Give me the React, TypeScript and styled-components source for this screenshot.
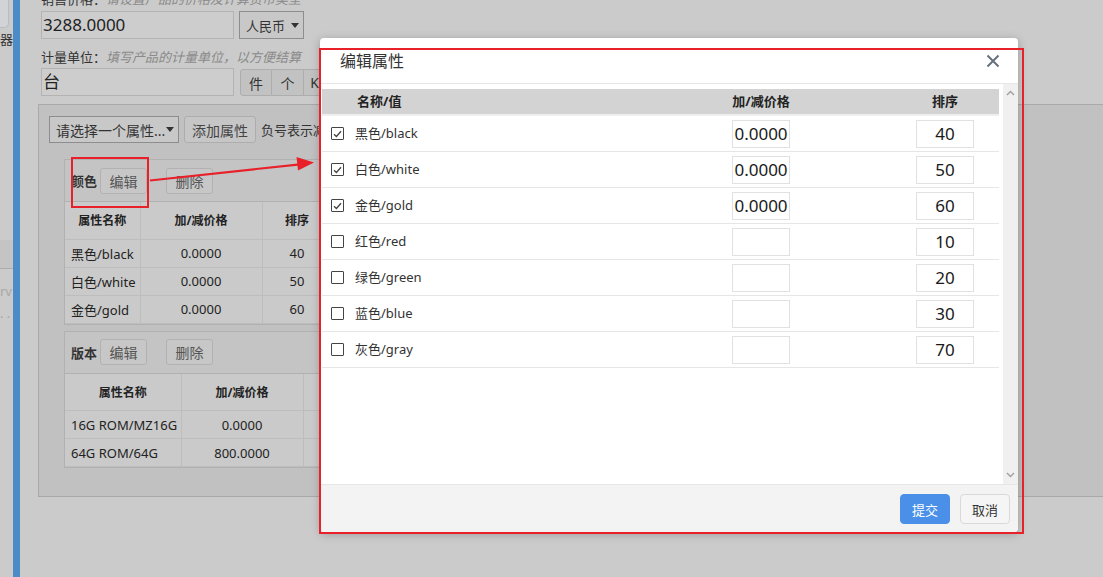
import React from 'react';
import styled, { createGlobalStyle } from 'styled-components';

const FONT = `"Noto Sans", "Noto Sans CJK SC", sans-serif`;
const RED = '#e8202a';

const GlobalStyle = createGlobalStyle`
  html, body {
    margin: 0;
    padding: 0;
  }
  body {
    font-family: ${FONT};
    color: #333;
    background: #cbcbcb;
  }
  * {
    box-sizing: border-box;
  }
`;

const Page = styled.div`
  position: relative;
  display: flex;
  width: 1103px;
  height: 577px;
  overflow: hidden;
  background: #cbcbcb;
`;

/* left navigation, mostly cut off */
const Sidebar = styled.aside`
  flex: none;
  width: 13px;
  display: flex;
  flex-direction: column;
  overflow: hidden;
`;

const SideTab = styled.div`
  width: 9px;
  height: 28px;
  background: #d1d3d6;
  border-right: 1px solid #b9bbbe;
  border-bottom: 1px solid #b9bbbe;
  border-radius: 0 0 5px 0;
`;

const SideLabel = styled.div<{ $muted?: boolean; $top: number }>`
  margin-top: ${(p) => p.$top}px;
  font-size: 13px;
  line-height: 16px;
  white-space: nowrap;
  color: ${(p) => (p.$muted ? '#a8a8a8' : '#333')};
`;

const SideBlock = styled.div`
  margin-top: 193px;
  height: 29px;
  background: #c4c4c4;
  border-bottom: 1px solid #adadad;
`;

const AccentBar = styled.div`
  flex: none;
  width: 7px;
  background: #4b8bc7;
`;

const Main = styled.main`
  flex: 1;
  min-width: 0;
  padding-left: 18px;
  display: flex;
  flex-direction: column;
`;

const FieldLabel = styled.div<{ $first?: boolean }>`
  margin: ${(p) => (p.$first ? '-10px 0 3px 3px' : '9px 0 2px 3px')};
  height: 18px;
  font-size: 13px;
  line-height: 18px;
  white-space: nowrap;
  color: #333;
`;

const Hint = styled.span`
  font-style: italic;
  color: #8a8a8a;
`;

const FieldRow = styled.div`
  display: flex;
  align-items: flex-start;
  gap: 5px;
  margin-left: 3px;
  height: 28px;
`;

const TextBox = styled.div`
  width: 193px;
  height: 28px;
  border: 1px solid #b3b3b3;
  background: #cdcdcd;
  font-size: 17px;
  line-height: 26px;
  padding-left: 1px;
  color: #222;
`;

const Caret = styled.span`
  flex: none;
  width: 0;
  height: 0;
  border-left: 4px solid transparent;
  border-right: 4px solid transparent;
  border-top: 5px solid #333;
`;

const SelectBox = styled.div<{ $w: number; $h: number; $size: number }>`
  width: ${(p) => p.$w}px;
  height: ${(p) => p.$h}px;
  display: flex;
  align-items: center;
  justify-content: space-between;
  padding: 0 4px 0 6px;
  border: 1px solid #8d8d8d;
  background: #c8c8c8;
  font-size: ${(p) => p.$size}px;
  color: #333;
  white-space: nowrap;
`;

const UnitGroup = styled.div`
  display: flex;
  margin-left: 1px;
  margin-top: 1px;
`;

const UnitButton = styled.div`
  width: 32px;
  height: 27px;
  display: flex;
  align-items: center;
  justify-content: center;
  background: #c2c2c2;
  border: 1px solid #adadad;
  border-left-width: 0;
  font-size: 14px;
  color: #333;

  &:first-child {
    border-left-width: 1px;
    border-radius: 3px 0 0 3px;
  }
`;

const AttrPanel = styled.section`
  margin-top: 8px;
  margin-right: -4px;
  height: 393px;
  border: 1px solid #a9a9a9;
  background: #c1c1c1;
  padding: 11px 0 0 10px;
`;

const Toolbar = styled.div`
  display: flex;
  align-items: center;
  gap: 5px;
  height: 27px;
`;

const ToolButton = styled.div`
  height: 27px;
  padding: 0 7px;
  display: flex;
  align-items: center;
  background: #c6c6c6;
  border: 1px solid #adadad;
  border-radius: 3px;
  font-size: 14px;
  color: #444;
`;

const ToolNote = styled.span`
  font-size: 13px;
  color: #333;
  white-space: nowrap;
`;

const GroupStack = styled.div`
  display: flex;
  flex-direction: column;
  gap: 6px;
  padding: 16px 0 0 15px;
`;

const AttrGroup = styled.div`
  width: 600px;
  border: 1px solid #b1b1b1;
  background: #c4c4c4;
`;

const GroupHead = styled.div`
  height: 42px;
  display: flex;
  align-items: center;
  padding-left: 6px;
  border-bottom: 1px solid #b1b1b1;
`;

const GroupName = styled.span`
  font-size: 13px;
  font-weight: bold;
  color: #333;
`;

const GroupButton = styled.div<{ $gap: number }>`
  margin-left: ${(p) => p.$gap}px;
  height: 26px;
  width: 47px;
  display: flex;
  align-items: center;
  justify-content: center;
  background: #c7c7c7;
  border: 1px solid #b2b2b2;
  border-radius: 3px;
  font-size: 14px;
  color: #555;
`;

const AttrTable = styled.table`
  border-collapse: collapse;
  background: #cacaca;
  font-size: 13px;
  color: #222;
`;

const HeadCell = styled.th<{ $w: number }>`
  width: ${(p) => p.$w}px;
  height: 37px;
  padding: 0;
  font-size: 12px;
  font-weight: bold;
  text-align: center;
  border-right: 1px solid #bdbdbd;
  border-bottom: 1px solid #bdbdbd;
`;

const BodyCell = styled.td<{ $left?: boolean }>`
  height: 28px;
  padding: ${(p) => (p.$left ? '0 0 0 6px' : '0')};
  text-align: ${(p) => (p.$left ? 'left' : 'center')};
  white-space: nowrap;
  border-right: 1px solid #bdbdbd;
  border-bottom: 1px solid #bdbdbd;
`;

/* modal */
const Dialog = styled.div`
  position: absolute;
  left: 320px;
  top: 38px;
  width: 698px;
  height: 494px;
  display: flex;
  flex-direction: column;
  background: #fff;
  border-radius: 4px;
  box-shadow: 0 2px 10px rgba(0, 0, 0, 0.25);
  overflow: hidden;
`;

const DialogHead = styled.div`
  height: 46px;
  flex: none;
  display: flex;
  align-items: center;
  justify-content: space-between;
  padding: 0 18px 0 20px;
  border-bottom: 1px solid #e6e6e6;
`;

const DialogTitle = styled.h3`
  margin: 0 0 1px;
  font-size: 16px;
  font-weight: normal;
  color: #333;
`;

const CloseButton = styled.span`
  display: flex;
  width: 14px;
  height: 14px;
`;

const DialogBody = styled.div`
  flex: 1;
  display: flex;
  min-height: 0;
`;

const BodyContent = styled.div`
  flex: 1;
  padding: 5px 4px 0 2px;
`;

const FakeScroll = styled.div`
  flex: none;
  width: 15px;
  background: #f0f0f0;
  display: flex;
  flex-direction: column;
  justify-content: space-between;
  align-items: center;
  padding: 6px 0 6px;
`;

const GRID = '33px 335px 142px 1fr';

const EditHead = styled.div`
  display: grid;
  grid-template-columns: ${GRID};
  height: 27px;
  background: #d3d3d3;
  border-bottom: 2px solid #efefef;
  font-size: 13px;
  font-weight: bold;
  line-height: 25px;
  color: #222;
`;

const HeadName = styled.div`
  grid-column: span 2;
  padding-left: 35px;
`;

const HeadCenter = styled.div`
  text-align: center;
`;

const HeadSort = styled.div`
  display: flex;
  justify-content: flex-end;
  padding-right: 25px;

  & > span {
    width: 58px;
    text-align: center;
  }
`;

const EditRow = styled.div`
  display: grid;
  grid-template-columns: ${GRID};
  align-items: center;
  height: 36px;
  border-bottom: 1px solid #e6e6e6;
`;

const CheckCell = styled.div`
  padding-left: 9px;
  display: flex;
`;

const CheckBox = styled.span`
  width: 13px;
  height: 13px;
  border: 1px solid #444;
  border-radius: 1px;
  background: #fff;
  display: flex;
  align-items: center;
  justify-content: center;
`;

const NameCell = styled.div`
  font-size: 13px;
  line-height: 16px;
  margin-top: -2px;
  color: #333;
`;

const PriceCell = styled.div`
  display: flex;
  justify-content: center;
`;

const SortCell = styled.div`
  display: flex;
  justify-content: flex-end;
  padding-right: 25px;
`;

const ValueInput = styled.input`
  width: 58px;
  height: 28px;
  padding: 0;
  border: 1px solid #e1e1e1;
  border-radius: 0;
  outline: none;
  background: #fff;
  font-family: ${FONT};
  font-size: 17px;
  text-align: center;
  color: #1a1a1a;
`;

const DialogFoot = styled.div`
  height: 48px;
  flex: none;
  display: flex;
  justify-content: flex-end;
  align-items: flex-start;
  gap: 10px;
  padding: 9px 8px 0 0;
  background: #f3f3f3;
  border-top: 1px solid #e6e6e6;
`;

const FootButton = styled.button<{ $primary?: boolean }>`
  width: 50px;
  height: 30px;
  padding: 0;
  border-radius: 4px;
  border: 1px solid ${(p) => (p.$primary ? '#4a90e9' : '#d9d9d9')};
  background: ${(p) => (p.$primary ? '#4a90e9' : '#f5f5f5')};
  color: ${(p) => (p.$primary ? '#fff' : '#333')};
  font-family: ${FONT};
  font-size: 13px;
`;

/* red markup drawn on the screenshot */
const MarkBox = styled.div<{ $x: number; $y: number; $w: number; $h: number }>`
  position: absolute;
  left: ${(p) => p.$x}px;
  top: ${(p) => p.$y}px;
  width: ${(p) => p.$w}px;
  height: ${(p) => p.$h}px;
  border: 2px solid ${RED};
  pointer-events: none;
`;

const MarkArrow = styled.svg`
  position: absolute;
  left: 148px;
  top: 152px;
  overflow: visible;
  pointer-events: none;
`;

type Option = { name: string; price: string; sort: string; checked: boolean };

const OPTIONS: Option[] = [
  { name: '黑色/black', price: '0.0000', sort: '40', checked: true },
  { name: '白色/white', price: '0.0000', sort: '50', checked: true },
  { name: '金色/gold', price: '0.0000', sort: '60', checked: true },
  { name: '红色/red', price: '', sort: '10', checked: false },
  { name: '绿色/green', price: '', sort: '20', checked: false },
  { name: '蓝色/blue', price: '', sort: '30', checked: false },
  { name: '灰色/gray', price: '', sort: '70', checked: false },
];

type Group = { name: string; widths: number[]; rows: string[][] };

const GROUPS: Group[] = [
  {
    name: '颜色',
    widths: [75, 122, 70, 120],
    rows: [
      ['黑色/black', '0.0000', '40', ''],
      ['白色/white', '0.0000', '50', ''],
      ['金色/gold', '0.0000', '60', ''],
    ],
  },
  {
    name: '版本',
    widths: [116, 122, 120],
    rows: [
      ['16G ROM/MZ16G', '0.0000', '10'],
      ['64G ROM/64G', '800.0000', '20'],
    ],
  },
];

const HEADERS = ['属性名称', '加/减价格', '排序', '操作'];

function AttrGroupBlock({ group }: { group: Group }) {
  return (
    <AttrGroup>
      <GroupHead>
        <GroupName>{group.name}</GroupName>
        <GroupButton $gap={3}>编辑</GroupButton>
        <GroupButton $gap={19}>删除</GroupButton>
      </GroupHead>
      <AttrTable>
        <thead>
          <tr>
            {group.widths.map((w, i) => (
              <HeadCell key={i} $w={w}>
                {HEADERS[i]}
              </HeadCell>
            ))}
          </tr>
        </thead>
        <tbody>
          {group.rows.map((row, r) => (
            <tr key={r}>
              {row.map((cell, c) => (
                <BodyCell key={c} $left={c === 0}>
                  {cell}
                </BodyCell>
              ))}
            </tr>
          ))}
        </tbody>
      </AttrTable>
    </AttrGroup>
  );
}

function Check({ checked }: { checked: boolean }) {
  return (
    <CheckBox>
      {checked && (
        <svg width="9" height="8" viewBox="0 0 9 8">
          <path d="M1 4.2 L3.4 6.5 L8 1.2" fill="none" stroke="#444" strokeWidth="1.3" />
        </svg>
      )}
    </CheckBox>
  );
}

export default function App() {
  return (
    <>
      <GlobalStyle />
      <Page>
        <Sidebar>
          <SideTab />
          <SideLabel $top={3}>器</SideLabel>
          <SideBlock />
          <SideLabel $top={14} $muted>
            rv
          </SideLabel>
          <SideLabel $top={6} $muted>
            . .
          </SideLabel>
        </Sidebar>
        <AccentBar />

        <Main>
          <FieldLabel $first>
            销售价格：<Hint>请设置产品的价格及计算货币类型</Hint>
          </FieldLabel>
          <FieldRow>
            <TextBox>3288.0000</TextBox>
            <SelectBox $w={65} $h={28} $size={13}>
              人民币
              <Caret />
            </SelectBox>
          </FieldRow>

          <FieldLabel>
            计量单位：<Hint>填写产品的计量单位，以方便结算</Hint>
          </FieldLabel>
          <FieldRow>
            <TextBox>台</TextBox>
            <UnitGroup>
              <UnitButton>件</UnitButton>
              <UnitButton>个</UnitButton>
              <UnitButton>KG</UnitButton>
              <UnitButton>米</UnitButton>
            </UnitGroup>
          </FieldRow>

          <AttrPanel>
            <Toolbar>
              <SelectBox $w={130} $h={27} $size={14}>
                请选择一个属性...
                <Caret />
              </SelectBox>
              <ToolButton>添加属性</ToolButton>
              <ToolNote>负号表示减少价格</ToolNote>
            </Toolbar>
            <GroupStack>
              {GROUPS.map((g) => (
                <AttrGroupBlock key={g.name} group={g} />
              ))}
            </GroupStack>
          </AttrPanel>
        </Main>

        <Dialog>
          <DialogHead>
            <DialogTitle>编辑属性</DialogTitle>
            <CloseButton>
              <svg width="14" height="14" viewBox="0 0 14 14">
                <path d="M1.5 1.5 L12.5 12.5 M12.5 1.5 L1.5 12.5" stroke="#66717e" strokeWidth="2" />
              </svg>
            </CloseButton>
          </DialogHead>
          <DialogBody>
            <BodyContent>
              <EditHead>
                <HeadName>名称/值</HeadName>
                <HeadCenter>加/减价格</HeadCenter>
                <HeadSort>
                  <span>排序</span>
                </HeadSort>
              </EditHead>
              {OPTIONS.map((o) => (
                <EditRow key={o.name}>
                  <CheckCell>
                    <Check checked={o.checked} />
                  </CheckCell>
                  <NameCell>{o.name}</NameCell>
                  <PriceCell>
                    <ValueInput readOnly value={o.price} />
                  </PriceCell>
                  <SortCell>
                    <ValueInput readOnly value={o.sort} />
                  </SortCell>
                </EditRow>
              ))}
            </BodyContent>
            <FakeScroll>
              <svg width="9" height="6" viewBox="0 0 9 6">
                <path d="M1 5 L4.5 1.5 L8 5" fill="none" stroke="#a3a3a3" strokeWidth="1.5" />
              </svg>
              <svg width="9" height="6" viewBox="0 0 9 6">
                <path d="M1 1 L4.5 4.5 L8 1" fill="none" stroke="#a3a3a3" strokeWidth="1.5" />
              </svg>
            </FakeScroll>
          </DialogBody>
          <DialogFoot>
            <FootButton $primary>提交</FootButton>
            <FootButton>取消</FootButton>
          </DialogFoot>
        </Dialog>

        <MarkBox $x={71} $y={157} $w={78} $h={51} />
        <MarkBox $x={319} $y={48} $w={705} $h={486} />
        <MarkArrow width="170" height="34" viewBox="0 0 170 34">
          <line x1="2" y1="28.5" x2="152" y2="12.3" stroke={RED} strokeWidth="2.2" />
          <polygon points="166,10.5 148.5,5 150,18.5" fill={RED} />
        </MarkArrow>
      </Page>
    </>
  );
}
